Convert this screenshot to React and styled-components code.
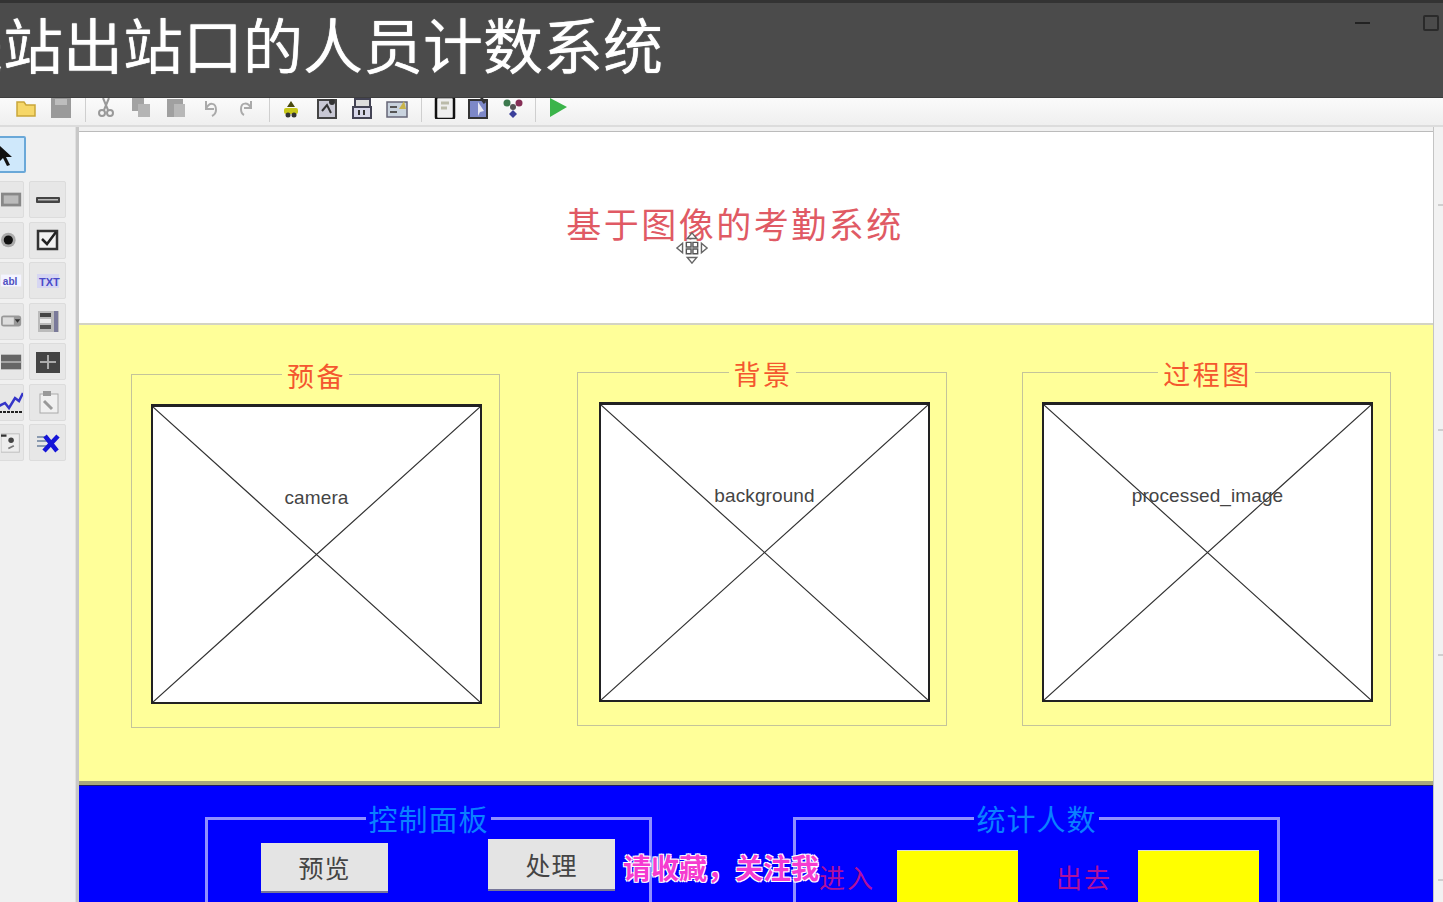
import React from "react";
import styled, { createGlobalStyle } from "styled-components";

const Global = createGlobalStyle`
  html, body { margin: 0; padding: 0; background: #f0f0f0; overflow: hidden; }
  body { font-family: "Liberation Sans", "Noto Sans CJK SC", sans-serif; }
  fieldset { min-width: 0; }
`;

const CJK = `"Noto Sans CJK SC", "Noto Sans CJK JP", sans-serif`;

const Page = styled.div`
  position: relative;
  width: 1443px;
  height: 902px;
  overflow: hidden;
  display: flex;
  flex-direction: column;
  filter: blur(0.7px);
`;

const CaptionBar = styled.header`
  position: relative;
  z-index: 2;
  flex: 0 0 98px;
  box-sizing: border-box;
  background: #4b4b4b;
  border-top: 3px solid #333;
  border-bottom: 1px solid #3e3e3e;
  display: flex;
  align-items: center;
  overflow: hidden;
`;

const CaptionText = styled.h1`
  margin: -14px 0 0 -57px;
  flex: 1;
  font: 400 60px/1 ${CJK};
  color: #fff;
  white-space: nowrap;
  text-shadow: 0 0 1px #fff;
`;

const WindowControls = styled.div`
  display: flex;
  align-items: center;
  gap: 53px;
  margin: -54px 4px 0 0;
`;

const MinBtn = styled.span`
  width: 15px;
  height: 2px;
  background: #222;
`;

const MaxBtn = styled.span`
  width: 12px;
  height: 12px;
  border: 2px solid #2a2a2a;
  border-radius: 2px;
`;

const Toolbar = styled.nav`
  flex: 0 0 29px;
  box-sizing: border-box;
  height: 29px;
  padding-left: 14px;
  background: linear-gradient(#fbfbfb, #efefef);
  border-bottom: 2px solid #dcdcdc;
  display: flex;
  align-items: flex-start;
`;

const ToolIcon = styled.span`
  flex: 0 0 24px;
  display: flex;
  justify-content: center;
  margin: -3px 0 0 ${(p) => p.$gap}px;
`;

const ToolSep = styled.span`
  flex: 0 0 1px;
  height: 24px;
  margin-left: ${(p) => p.$gap}px;
  background: #cfcfcf;
`;

const Body = styled.div`
  flex: 1;
  display: flex;
  min-height: 0;
`;

const Palette = styled.aside`
  flex: 0 0 76px;
  box-sizing: border-box;
  background: #f0f0f0;
  border-right: 1px solid #e0e0e0;
  padding-top: 9px;
  overflow: hidden;
`;

const SelectTool = styled.div`
  box-sizing: border-box;
  width: 42px;
  height: 37px;
  margin: 0 0 8px -16px;
  background: #cfe8fb;
  border: 2px solid #6aa8d8;
  border-radius: 2px;
  display: flex;
  align-items: center;
  justify-content: flex-end;
  padding-right: 10px;
`;

const ToolGrid = styled.div`
  display: grid;
  grid-template-columns: 36px 37px;
  grid-auto-rows: 37px;
  gap: 3.5px 5px;
  margin-left: -12px;
`;

const ToolBtn = styled.div`
  background: #e7e7e7;
  border: 1px solid #dcdcdc;
  border-radius: 2px;
  display: flex;
  align-items: center;
  justify-content: ${(p) => (p.$clip ? "flex-end" : "center")};
  overflow: hidden;
`;

const Gutter = styled.div`
  flex: 0 0 3px;
  background: #c8c8c8;
`;

const Canvas = styled.main`
  flex: 0 0 1354px;
  padding-top: 4px;
  background: #f0f0f0;
  display: flex;
  flex-direction: column;
`;

const TitleArea = styled.section`
  position: relative;
  flex: 0 0 191px;
  background: #fff;
  border-top: 1px solid #bbb;
  border-bottom: 2px solid #d4d4c4;
  display: flex;
  justify-content: center;
  align-items: center;
  padding-right: 42px;
`;

const AppTitle = styled.h2`
  margin: 0 0 11px;
  font: 400 35px/1 ${CJK};
  letter-spacing: 2.5px;
  color: #e05a64;
`;

const MoveCursor = styled.svg`
  position: absolute;
  left: 596px;
  top: 99px;
`;

const YellowArea = styled.section`
  flex: 0 0 460px;
  box-sizing: border-box;
  background: #ffff99;
  border-bottom: 4px solid #a9a97c;
  padding-left: 52px;
  display: grid;
  grid-template-columns: 446px 445px 369px;
`;

const Panel = styled.fieldset`
  box-sizing: border-box;
  width: ${(p) => p.$w}px;
  height: 373px;
  margin: ${(p) => p.$top}px 0 0;
  padding: 11px 0 0;
  border: 1px solid #c4c49a;
`;

const PanelLegend = styled.legend`
  margin: 0 auto;
  padding: 4px 3px 0 5px;
  font: 400 27px/34px ${CJK};
  letter-spacing: 2.5px;
  color: #f4572f;
`;

const Axes = styled.div`
  position: relative;
  box-sizing: border-box;
  width: 331px;
  height: 300px;
  margin-left: ${(p) => p.$x}px;
  background: #fff;
  border: 2px solid #222;
  border-top-width: 3px;
`;

const Cross = styled.svg`
  display: block;
  width: 100%;
  height: 100%;
`;

const AxesLabel = styled.span`
  position: absolute;
  left: 0;
  right: 0;
  top: 79px;
  text-align: center;
  font: 400 19px/24px "Liberation Sans", sans-serif;
  letter-spacing: 0.1px;
  color: #444;
`;

const BlueArea = styled.section`
  flex: 1;
  background: #0000ff;
  border-top: 1px solid #20205a;
  padding-left: 126px;
  display: flex;
  overflow: hidden;
  gap: 141px;
`;

const BluePanel = styled.fieldset`
  box-sizing: border-box;
  flex: 0 0 ${(p) => p.$w}px;
  height: 160px;
  margin: 14px 0 0;
  padding: 0;
  border: 3px solid #8f8fff;
  display: flex;
  align-items: flex-start;
`;

const BlueLegend = styled.legend`
  margin: 0 auto;
  padding: 0 2px;
  font: 400 29px/36px ${CJK};
  letter-spacing: 1px;
  color: #0a80ff;
`;

const PushButton = styled.div`
  box-sizing: border-box;
  flex: 0 0 127px;
  height: ${(p) => p.$h}px;
  margin: ${(p) => p.$top}px 0 0 ${(p) => p.$left}px;
  background: #e4e4e4;
  border-bottom: 2px solid #77779a;
  display: flex;
  align-items: center;
  justify-content: center;
  font: 400 25px/1 ${CJK};
  letter-spacing: 1px;
  color: #444;
`;

const CountLabel = styled.span`
  flex: 0 0 56px;
  margin: ${(p) => p.$top}px 0 0 ${(p) => p.$left}px;
  font: 400 26px/32px ${CJK};
  letter-spacing: 2px;
  white-space: nowrap;
  color: #b0109a;
`;

const CountBox = styled.div`
  flex: 0 0 121px;
  height: 70px;
  margin: 14px 0 0 ${(p) => p.$left}px;
  background: #ffff00;
  border-top: 1px solid #ddd;
`;

const ScrollEdge = styled.div`
  flex: 0 0 10px;
  background: #f2f2f2;
  border-left: 1px solid #c4c4c4;
  display: flex;
  flex-direction: column;
  align-items: flex-end;
`;

const Tick = styled.span`
  width: 6px;
  height: 2px;
  margin-top: ${(p) => p.$top}px;
  background: #cfcfcf;
`;

const Subtitle = styled.div`
  position: absolute;
  left: 623px;
  top: 849px;
  font: 700 28px/36px ${CJK};
  white-space: nowrap;
  color: #f53bd0;
  text-shadow: 1px 1px 0 #fff, -1px -1px 0 #fff, 1px -1px 0 #fff, -1px 1px 0 #fff;
`;

/* ---------- toolbar / palette drawings ---------- */
const S = ({ children, s = 24, vb = 24 }) => (
  <svg width={s} height={s} viewBox={`0 0 ${vb} ${vb}`}>{children}</svg>
);

const toolIcons = {
  folder: <S><path d="M3 7h7l2 3h9v11H3z" fill="#f6d768" stroke="#c9a63a" strokeWidth="1.5" /></S>,
  save: <S><rect x="2" y="3" width="20" height="20" fill="#9a9a9a" /><rect x="6" y="4" width="12" height="6" fill="#bdbdbd" /></S>,
  cut: <S><path d="M9 3l5 12M15 3l-5 12" stroke="#999" strokeWidth="2" /><circle cx="8" cy="18" r="3" fill="none" stroke="#999" strokeWidth="2" /><circle cx="16" cy="18" r="3" fill="none" stroke="#999" strokeWidth="2" /></S>,
  copy: <S><rect x="3" y="3" width="12" height="13" fill="#a2a2a2" /><rect x="9" y="9" width="12" height="13" fill="#b4b4b4" /></S>,
  paste: <S><rect x="3" y="4" width="16" height="18" fill="#a0a0a0" /><rect x="10" y="9" width="11" height="13" fill="#b8b8b8" /></S>,
  undo: <S><path d="M8 6v8h8M8 14c3-7 10-7 10 1 0 3-2 5-4 6" fill="none" stroke="#aaa" strokeWidth="2" /></S>,
  redo: <S><path d="M17 6v7H10M17 13c-3-6-10-6-10 1 0 3 1 5 3 6" fill="none" stroke="#aaa" strokeWidth="2" /></S>,
  bee: <S><path d="M12 6l4 6h-8z" fill="#4a4a10" /><rect x="5" y="13" width="14" height="6" rx="2" fill="#c7c71a" /><circle cx="9" cy="20" r="2.5" fill="#333" /><circle cx="15" cy="20" r="2.5" fill="#333" /></S>,
  dlg1: <S><rect x="3" y="5" width="18" height="18" fill="#c8c8d4" stroke="#444" strokeWidth="2" /><path d="M7 16l5-6 4 8" stroke="#333" strokeWidth="2" fill="none" /><circle cx="17" cy="7" r="3" fill="#333" /></S>,
  dlg2: <S><rect x="5" y="4" width="15" height="8" fill="#ddd" stroke="#445" strokeWidth="2" /><rect x="3" y="12" width="18" height="11" fill="#d8d8ea" stroke="#445" strokeWidth="2" /><path d="M9 15v5M14 15v5" stroke="#333" strokeWidth="2" /></S>,
  dlg3: <S><rect x="2" y="7" width="20" height="15" fill="#c9d3de" stroke="#667" strokeWidth="1.5" /><path d="M14 14l5-8 2 8z" fill="#c9b44a" /><path d="M5 12h7M5 17h7" stroke="#555" strokeWidth="2" /></S>,
  page: <S><rect x="3" y="2" width="18" height="22" rx="2" fill="#eee" stroke="#111" strokeWidth="2.5" /><path d="M8 8h8M8 13h6" stroke="#bba" strokeWidth="3" /></S>,
  obj: <S><rect x="3" y="5" width="18" height="18" fill="#7d88c8" stroke="#333" strokeWidth="2" /><path d="M12 7l6 9-4 1-2 4z" fill="#e8e8f4" /><path d="M15 3l4 5" stroke="#333" strokeWidth="3" /></S>,
  tree: <S><circle cx="6" cy="8" r="3.5" fill="#3c7a4e" /><circle cx="18" cy="8" r="3.5" fill="#862f56" /><circle cx="12" cy="12" r="3" fill="#555" /><path d="M12 15l4 4-4 4-4-4z" fill="#3b3f9a" /></S>,
  play: <S><path d="M4 3l17 9-17 10z" fill="#3bb44a" /></S>,
};

const Glyph = ({ children }) => <S s={30} vb={30}>{children}</S>;

const Arrow = () => (
  <svg width="16" height="24" viewBox="0 0 16 24"><path d="M1 2v17l4-4 4 8 3-1-4-8h6z" fill="#111" /></svg>
);

const palette = [
  [<S s={22}><rect x="0" y="4" width="22" height="15" fill="#888" /><rect x="3" y="7" width="16" height="9" fill="#bbb" /></S>,
    <Glyph><rect x="3" y="12" width="24" height="6" rx="1" fill="#444" /><rect x="5" y="14" width="20" height="1.5" fill="#bbb" /></Glyph>],
  [<S s={22}><circle cx="8" cy="12" r="8" fill="#aaa" /><circle cx="8" cy="12" r="5" fill="#111" /></S>,
    <Glyph><rect x="5" y="6" width="19" height="18" fill="#f2f2f2" stroke="#333" strokeWidth="2.5" /><path d="M9 14l5 5 9-12" fill="none" stroke="#222" strokeWidth="2.5" /></Glyph>],
  [<S s={22}><rect x="0" y="5" width="22" height="13" fill="#f4f4ff" /><text x="2" y="16" fontSize="11" fontWeight="700" fontFamily="Liberation Sans" fill="#5050c0">abl</text></S>,
    <Glyph><rect x="4" y="8" width="22" height="14" fill="#d6d6f2" /><text x="6" y="20" fontSize="11" fontWeight="700" fontFamily="Liberation Sans" fill="#4a4ac8">TXT</text></Glyph>],
  [<S s={22}><rect x="0" y="6" width="22" height="12" rx="3" fill="#999" /><rect x="2" y="8" width="12" height="8" fill="#ddd" /><path d="M15 10h6l-3 4z" fill="#333" /></S>,
    <Glyph><rect x="5" y="5" width="21" height="21" fill="#bbb" /><rect x="7" y="7" width="11" height="4" fill="#444" /><rect x="7" y="13" width="11" height="4" fill="#eee" /><rect x="7" y="19" width="11" height="4" fill="#555" /><rect x="21" y="5" width="4" height="21" fill="#7a7a9a" /></Glyph>],
  [<S s={22}><rect x="0" y="4" width="22" height="16" fill="#666" /><rect x="0" y="11" width="22" height="2" fill="#aaa" /></S>,
    <Glyph><rect x="3" y="5" width="24" height="21" fill="#444" /><path d="M7 15h16M15 8v14" stroke="#aaa" strokeWidth="2" /></Glyph>],
  [<S s={24}><path d="M0 16l6-3 4 5 6-10 4 3 4-8" fill="none" stroke="#3535c8" strokeWidth="2.5" /><path d="M0 22h24" stroke="#222" strokeWidth="2" strokeDasharray="3 1" /></S>,
    <Glyph><rect x="7" y="7" width="18" height="19" fill="#f0f0f0" stroke="#aaa" /><rect x="10" y="4" width="8" height="5" fill="#999" /><path d="M11 14l8 8" stroke="#999" strokeWidth="3" /></Glyph>],
  [<S s={22}><rect x="0" y="2" width="20" height="20" fill="#ededed" stroke="#bbb" /><circle cx="11" cy="9" r="3" fill="#444" /><path d="M0 4h6" stroke="#333" strokeWidth="2.5" /><path d="M8 18l6-3" stroke="#777" strokeWidth="2" /></S>,
    <Glyph><path d="M4 9h11M4 13h11M4 18h11" stroke="#8a9ab0" strokeWidth="2" /><path d="M12 8l12 15M25 8L11 23" stroke="#1515d8" strokeWidth="4.5" /></Glyph>],
];

const Cells = ({ width = 327, height = 295 }) => (
  <Cross viewBox={`0 0 ${width} ${height}`} preserveAspectRatio="none">
    <path d={`M0 0L${width} ${height}M${width} 0L0 ${height}`} stroke="#333" strokeWidth="1.2" fill="none" />
  </Cross>
);

/* [icon, gap before it]; "sep" entries carry only the gap */
const Tools = [
  ["folder", 0], ["save", 11], ["sep", 12], ["cut", 8], ["copy", 11], ["paste", 11], ["undo", 10], ["redo", 12], ["sep", 11],
  ["bee", 9], ["dlg1", 12], ["dlg2", 11], ["dlg3", 11], ["sep", 12],
  ["page", 11], ["obj", 9], ["tree", 11], ["sep", 10],
  ["play", 10],
];

const panels = [
  { legend: "预备", label: "camera", top: 30, w: 369, x: 19 },
  { legend: "背景", label: "background", top: 28, w: 370, x: 21 },
  { legend: "过程图", label: "processed_image", top: 28, w: 369, x: 19 },
];

export default function App() {
  return (
    <Page>
      <Global />
      <CaptionBar>
        <CaptionText>进站出站口的人员计数系统</CaptionText>
        <WindowControls>
          <MinBtn />
          <MaxBtn />
        </WindowControls>
      </CaptionBar>
      <Toolbar>
        {Tools.map(([name, gap], i) =>
          name === "sep" ? <ToolSep key={i} $gap={gap} /> : <ToolIcon key={i} $gap={gap}>{toolIcons[name]}</ToolIcon>
        )}
      </Toolbar>
      <Body>
        <Palette>
          <SelectTool><Arrow /></SelectTool>
          <ToolGrid>
            {palette.map((row, i) => (
              <React.Fragment key={i}>
                <ToolBtn $clip>{row[0]}</ToolBtn>
                <ToolBtn>{row[1]}</ToolBtn>
              </React.Fragment>
            ))}
          </ToolGrid>
        </Palette>
        <Gutter />
        <Canvas>
          <TitleArea>
            <AppTitle>基于图像的考勤系统</AppTitle>
            <MoveCursor width="34" height="34" viewBox="0 0 36 36">
              <path d="M18 2l5 6h-10zM18 34l5-6h-10zM2 18l6-5v10zM34 18l-6-5v10z" fill="#fff" stroke="#666" strokeWidth="1.5" />
              <path d="M12 12h5v5h-5zM19 12h5v5h-5zM12 19h5v5h-5zM19 19h5v5h-5z" fill="#fff" stroke="#555" strokeWidth="1.5" />
            </MoveCursor>
          </TitleArea>
          <YellowArea>
            {panels.map((p) => (
              <Panel key={p.label} $top={p.top} $w={p.w}>
                <PanelLegend>{p.legend}</PanelLegend>
                <Axes $x={p.x}>
                  <Cells />
                  <AxesLabel>{p.label}</AxesLabel>
                </Axes>
              </Panel>
            ))}
          </YellowArea>
          <BlueArea>
            <BluePanel $w={447}>
              <BlueLegend>控制面板</BlueLegend>
              <PushButton $h={50} $top={7} $left={53}>预览</PushButton>
              <PushButton $h={52} $top={3} $left={100}>处理</PushButton>
            </BluePanel>
            <BluePanel $w={487}>
              <BlueLegend>统计人数</BlueLegend>
              <CountLabel $top={25} $left={23}>进入</CountLabel>
              <CountBox $left={22} />
              <CountLabel $top={25} $left={38}>出去</CountLabel>
              <CountBox $left={26} />
            </BluePanel>
          </BlueArea>
        </Canvas>
        <ScrollEdge>
          <Tick $top={77} />
          <Tick $top={223} />
          <Tick $top={223} />
          <Tick $top={223} />
        </ScrollEdge>
      </Body>
      <Subtitle>请收藏，关注我</Subtitle>
    </Page>
  );
}
